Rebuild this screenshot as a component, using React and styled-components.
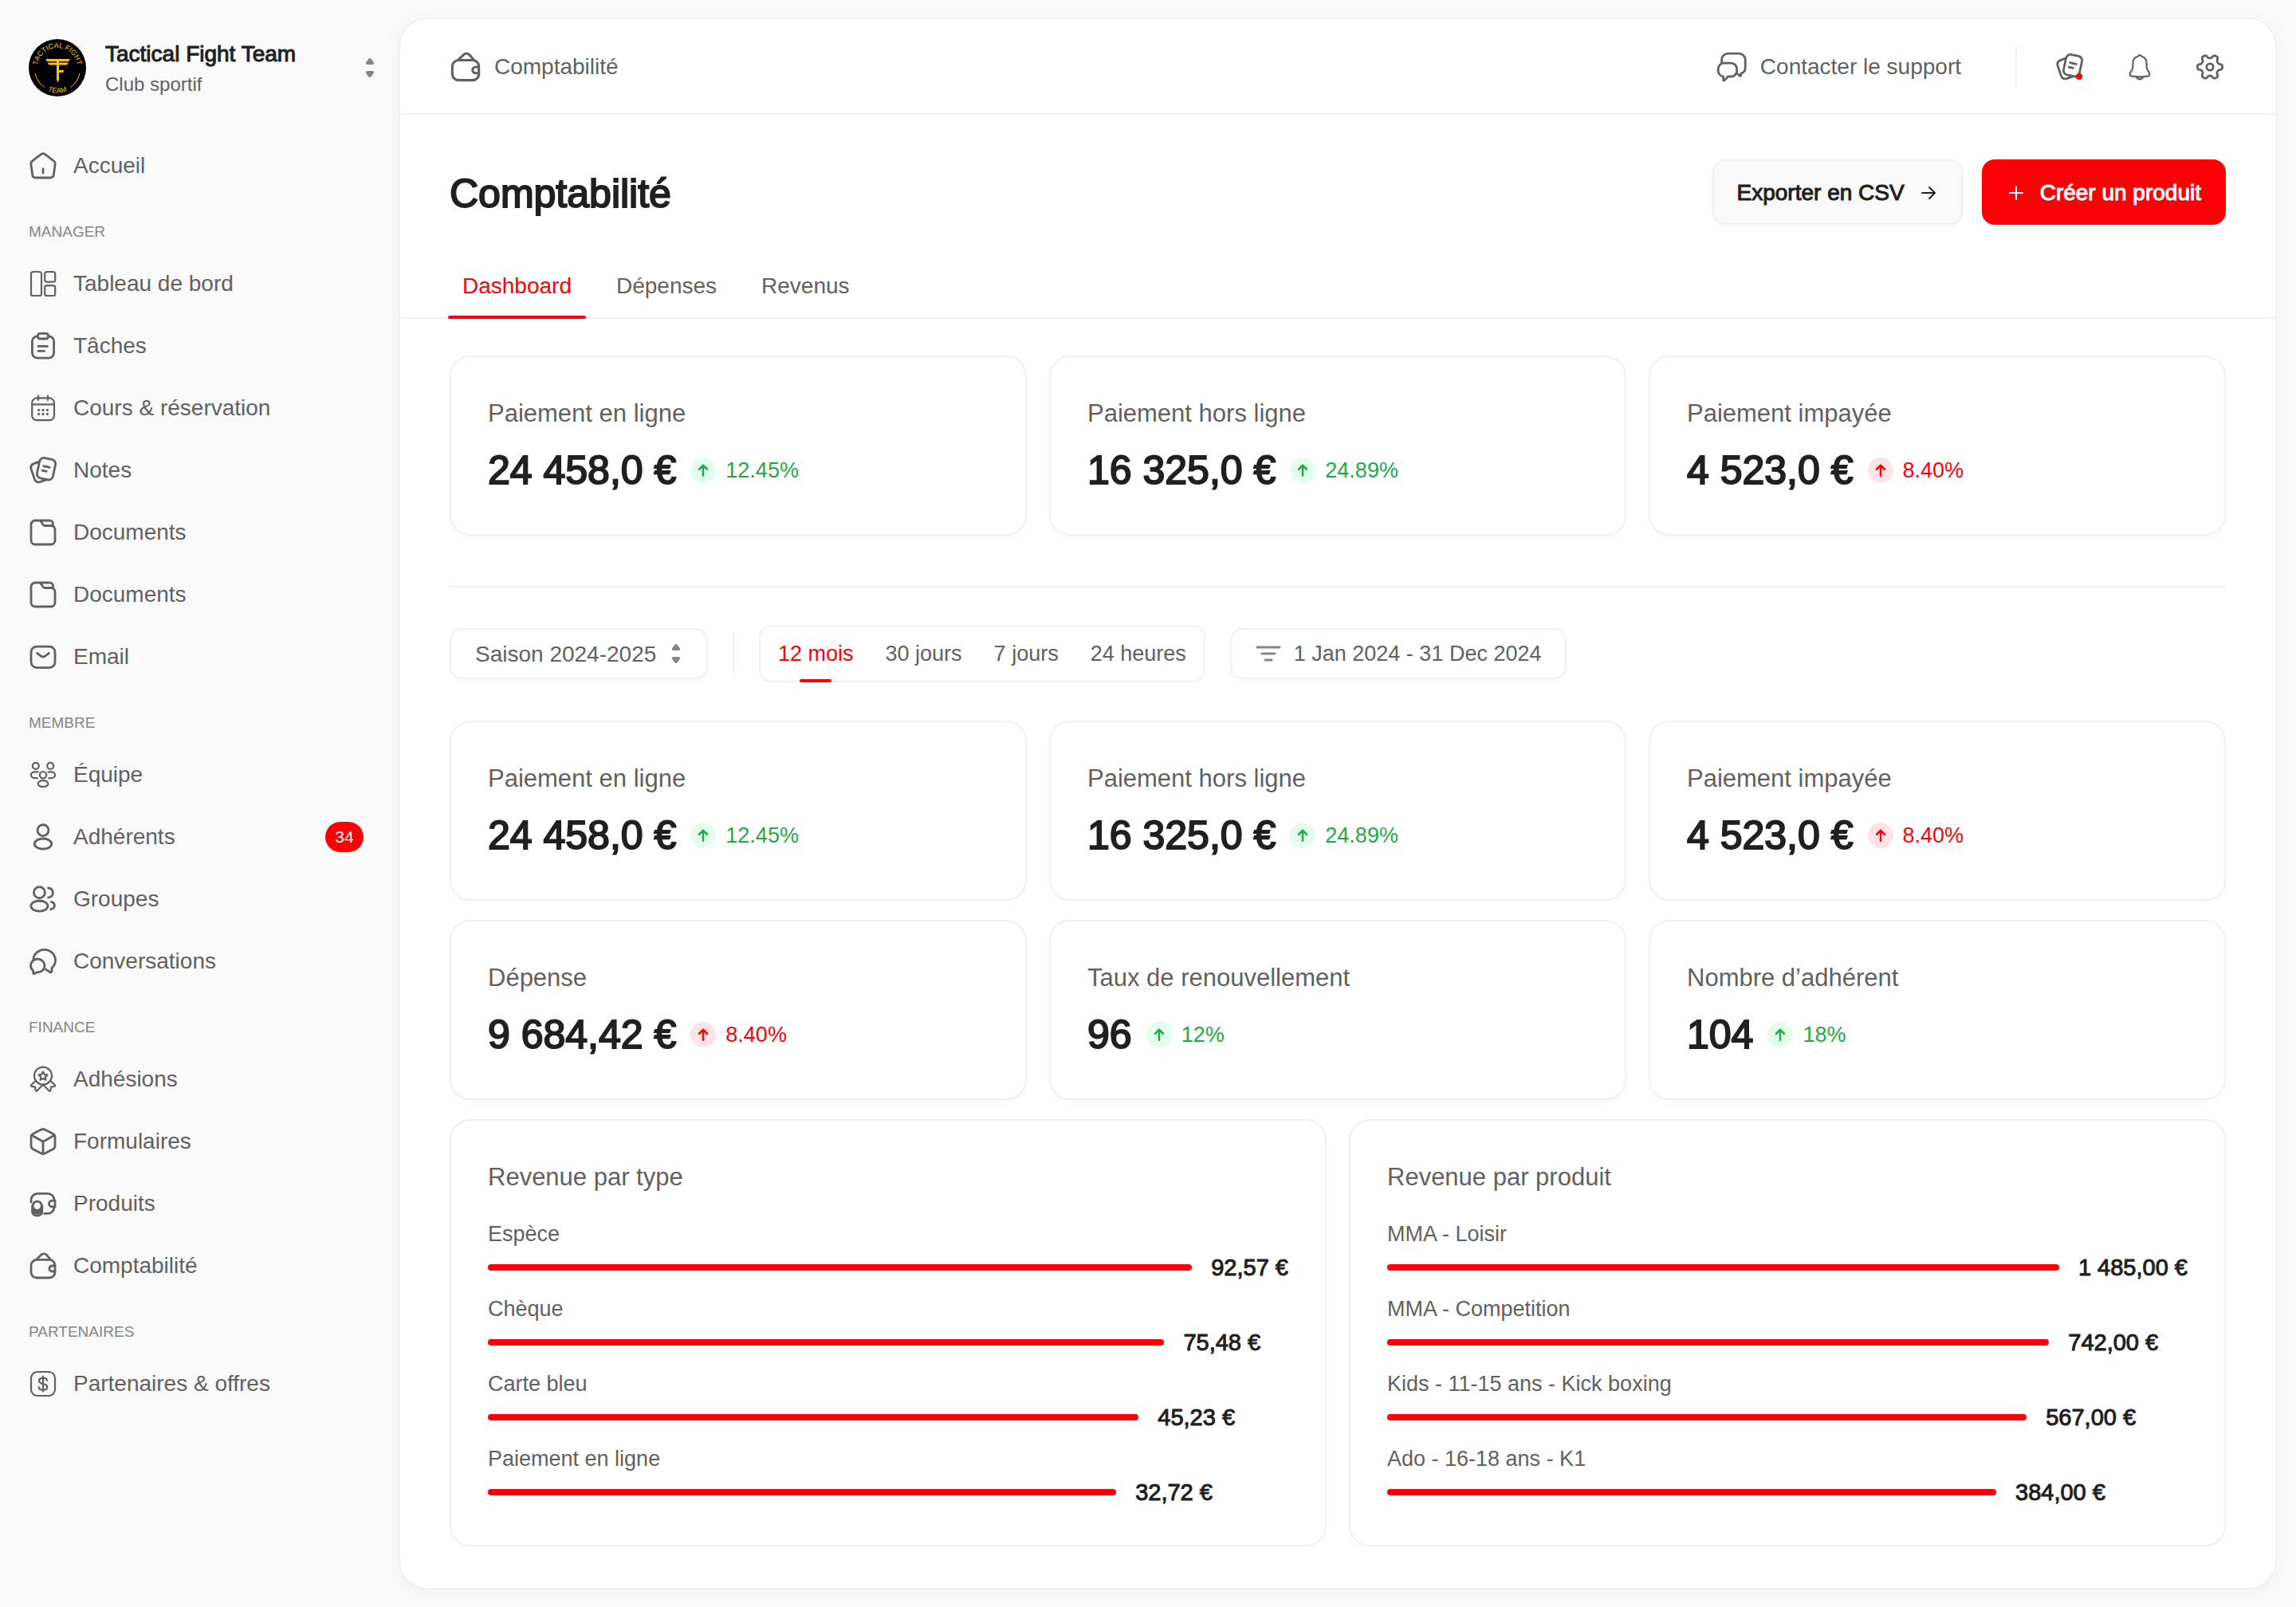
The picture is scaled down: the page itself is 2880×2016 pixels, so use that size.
import React from "react";
import styled, { createGlobalStyle, css } from "styled-components";

const color = {
  page: "#f9f9f9",
  surface: "#ffffff",
  line: "#f0f0f0",
  text: "#616161",
  strong: "#202020",
  muted: "#858585",
  red: "#fb0007",
  redSoft: "#ffe4e6",
  green: "#22a94a",
  greenSoft: "#e3fdec",
};

const Global = createGlobalStyle`
  *, *::before, *::after { box-sizing: border-box; }
  body {
    margin: 0;
    background: ${color.page};
    color: ${color.text};
    font-family: "Liberation Sans", Arial, sans-serif;
    font-size: 28px;
  }
  button, select { font: inherit; color: inherit; margin: 0; cursor: pointer; }
  a { color: inherit; text-decoration: none; }
  h1, h2, p, ul, dl, dd { margin: 0; padding: 0; font-weight: 400; }
  ul { list-style: none; }
`;

const medium = css`
  color: ${color.strong};
  -webkit-text-stroke: 1px currentColor;
`;

const display = css`
  color: ${color.strong};
  font-size: 50px;
  line-height: 60px;
  -webkit-text-stroke: 2px currentColor;
`;

/* ---------- icons ---------- */

const Svg = styled.svg`
  flex: none;
  display: block;
  width: ${(p) => p.$size || 36}px;
  height: ${(p) => p.$size || 36}px;
  fill: none;
  stroke: currentColor;
  stroke-width: ${(p) => p.$weight || 2.8};
  stroke-linecap: round;
  stroke-linejoin: round;
`;

const cogPath = (() => {
  const points = [];
  for (let i = 0; i < 120; i += 1) {
    const a = (i / 120) * Math.PI * 2;
    const wave = Math.tanh(2 * Math.cos(6 * a)) / Math.tanh(2);
    const r = 13.4 + 2.2 * wave;
    points.push(`${(18 + r * Math.cos(a)).toFixed(2)} ${(18 + r * Math.sin(a)).toFixed(2)}`);
  }
  return `M${points.join("L")}Z`;
})();

const icons = {
  home: (
    <>
      <path d="M15.4 3.6a4.4 4.4 0 0 1 5.2 0L31.4 11.8a4.4 4.4 0 0 1 1.7 4.1L31.4 29a4.6 4.6 0 0 1-4.5 4H9.1a4.6 4.6 0 0 1-4.5-4L2.9 15.9a4.4 4.4 0 0 1 1.7-4.1Z" />
      <path d="M18 22v5" />
    </>
  ),
  board: (
    <>
      <rect x="3" y="3" width="13" height="30" rx="2.6" />
      <rect x="20.2" y="3" width="13" height="12.6" rx="2.6" />
      <rect x="20.2" y="20.2" width="13" height="12.8" rx="2.6" />
    </>
  ),
  tasks: (
    <>
      <path d="M11.6 5.8h-1A6.4 6.4 0 0 0 4.4 12v14.4a6.8 6.8 0 0 0 6.8 6.8h13.6a6.8 6.8 0 0 0 6.8-6.8V12a6.4 6.4 0 0 0-6.2-6.2h-1" />
      <rect x="11.6" y="2.4" width="12.8" height="6.6" rx="2.4" />
      <path d="M12 18.4h11.4M12 24.4h7.4" />
    </>
  ),
  calendar: (
    <>
      <rect x="4.2" y="5.4" width="27.8" height="27.8" rx="6" />
      <path d="M4.2 13.4H32M12 2.6v5.4M24 2.6v5.4" />
      <g fill="currentColor" stroke="none">
        <circle cx="12.6" cy="20.3" r="1.6" />
        <circle cx="18" cy="20.3" r="1.6" />
        <circle cx="23.4" cy="20.3" r="1.6" />
        <circle cx="12.6" cy="25.4" r="1.6" />
        <circle cx="18" cy="25.4" r="1.6" />
        <circle cx="23.4" cy="25.4" r="1.6" />
      </g>
    </>
  ),
  notes: (
    <>
      <rect x="11.8" y="3.2" width="20.4" height="26" rx="5.6" transform="rotate(12 22 16.2)" />
      <path d="M12.6 7.2 6.6 9.6C3.4 10.8 2.2 13.1 3 16.2L7.2 28.6c1 3.3 3.6 4.900 7 4.100l8.800-3" />
      <path d="m18.6 12.6 7.6 1.8M17 18.2l5.2 1.2" />
    </>
  ),
  folder: (
    <path d="M14.5 3H8a5 5 0 0 0-5 5v20a5 5 0 0 0 5 5h20a5 5 0 0 0 5-5V14.5a5 5 0 0 0-5-5h-7.4a3 3 0 0 1-2.5-1.3L14.5 3h12a4 4 0 0 1 4 4v3" />
  ),
  mail: (
    <>
      <rect x="3" y="5.2" width="30" height="26.4" rx="7" />
      <path d="m10.6 13.4 4.2 3.3a5.2 5.2 0 0 0 6.4 0l4.2-3.3" />
    </>
  ),
  team: (
    <>
      <circle cx="8.8" cy="6.8" r="4" />
      <circle cx="27.2" cy="6.8" r="4" />
      <circle cx="18" cy="18.2" r="4.2" />
      <ellipse cx="18" cy="29.2" rx="6.4" ry="4" />
      <path d="M11.4 14.400H8.400c-3.200 0-5.600 1.600-5.600 3.900s2.400 3.900 5.600 3.900h2.400M24.600 14.400h3c3.200 0 5.600 1.600 5.600 3.900s-2.400 3.900-5.600 3.900h-2.400" />
    </>
  ),
  user: (
    <>
      <circle cx="18" cy="9.6" r="7" />
      <ellipse cx="18" cy="26.6" rx="10.8" ry="6.6" />
    </>
  ),
  users: (
    <>
      <circle cx="13.4" cy="9.6" r="7" />
      <ellipse cx="13.4" cy="26.6" rx="10.6" ry="6.6" />
      <path d="M24.6 4c3.6.2 5.8 2.6 5.8 5.9s-2.2 5.7-5.8 5.9M28.2 21.4c2.6.6 4.2 2.2 4.2 4.5 0 2.4-1.8 4.2-4.8 4.8" />
    </>
  ),
  chat: (
    <>
      <path d="M5.8 15.4A13.9 13.6 0 0 1 33.5 16.4c0 3.900-1.500 7.200-4.300 9.600l-.4 4.400c-.1 1.400-.9 1.800-2 1.100l-6-3.600" />
      <path d="M11.2 15a8.7 8.7 0 0 1 8.8 8.6c0 4.700-3.600 7.900-8.200 8.100-1.200 0-2 .3-2.800.8l-1.600.9c-.9.4-1.500.1-1.600-.9l-.2-2.600c-2-1.600-3.100-3.700-3.100-6.300A8.7 8.7 0 0 1 11.2 15Z" />
    </>
  ),
  award: (
    <>
      <circle cx="18" cy="13.6" r="11" />
      <path d="m18 8.4 1.7 3.4 3.7.6-2.6 2.7.6 3.7-3.4-1.7-3.4 1.7.6-3.7-2.6-2.7 3.7-.6Z" />
      <path d="m8.2 20.2-5 5c-.7.8-.4 1.5.5 1.7l4.3.7.7 4.3c.2 1 1 1.2 1.7.5l7.6-8 7.6 8c.7.7 1.5.5 1.7-.5l.7-4.3 4.3-.7c.9-.2 1.2-.9.5-1.7l-5-5" />
    </>
  ),
  box: (
    <>
      <path d="M15.4 3.2a5.6 5.6 0 0 1 5.2 0l9.8 5.1a4.8 4.8 0 0 1 2.6 4.3v10.8a4.8 4.8 0 0 1-2.6 4.3l-9.8 5.1a5.6 5.6 0 0 1-5.2 0l-9.8-5.1A4.8 4.8 0 0 1 3 23.4V12.6a4.8 4.8 0 0 1 2.6-4.3Z" />
      <path d="M4 10.2 18 18.200l14-8M18 18.200V33" />
    </>
  ),
  coins: (
    <>
      <path d="M3 16v-2.600a8 8 0 0 1 8-8h13a8 8 0 0 1 8 8v.8M19.600 30.400H24a8 8 0 0 0 8-8v-.4" />
      <path d="M33 14.200h-3.600a3.900 3.900 0 0 0 0 7.800H33Z" />
      <circle cx="10.700" cy="20.800" r="5.600" />
      <path d="M4.600 21v7.200c0 2.800 2.600 4.800 6.100 4.800s6.100-2 6.100-4.800V21M4.800 24.600c.8 2 3 3.400 5.900 3.400s5.100-1.400 5.900-3.400" />
      <path d="M4.800 28c.8 1.400 3 2.300 5.900 2.300s5.100-.9 5.900-2.300" />
    </>
  ),
  wallet: (
    <>
      <rect x="3" y="10.400" width="30" height="22.600" rx="7" />
      <path d="m9.800 10 6-5.900a4.600 4.600 0 0 1 6.400 0l5 5.900" />
      <path d="M33 18h-3.600a3.500 3.500 0 0 0 0 7H33" />
    </>
  ),
  dollar: (
    <>
      <rect x="3" y="3" width="30" height="30" rx="8" />
      <path d="M23 13.800c-.3-2-2.200-3.200-5-3.200s-5 1.400-5 3.600 1.800 3.200 5 3.800 5.200 1.600 5.200 4-2.200 3.700-5.200 3.700-5.200-1.300-5.300-3.500M18 8.600v19" />
    </>
  ),
  support: (
    <>
      <path d="M7.600 15v-3.800A8 8 0 0 1 15.600 3.200h13.600a8 8 0 0 1 8 8v9.600a8 8 0 0 1-5.600 7.600v2c0 1-.8 1.300-1.500.6l-3.500-3" />
      <path d="M10.400 15.200h9a7.200 7.200 0 0 1 7.200 7.200v2.400a7.200 7.200 0 0 1-7.200 7.200h-3.800l-4.200 4.600c-.9.9-1.800.6-1.800-.6v-4.200A7 7 0 0 1 3.200 25v-2.600a7.200 7.200 0 0 1 7.200-7.200Z" />
    </>
  ),
  bell: (
    <>
      <path d="M18 3.200c-1.300 0-2 .6-2.400 1.600-4 1.100-6.200 4.400-6.200 8.700v3.800c0 2.200-.6 3.800-1.700 5.400L6.200 25c-1.400 2.400-.5 4.300 1.900 4.600 3.200.5 6.500.7 9.900.7s6.700-.2 9.900-.7c2.400-.3 3.300-2.200 1.900-4.600l-1.500-2.300c-1.100-1.600-1.700-3.200-1.700-5.400v-3.800c0-4.300-2.200-7.600-6.200-8.700-.4-1-1.100-1.600-2.400-1.600Z" />
      <path d="M14 30.400c.5 1.700 1.900 2.900 4 2.900s3.500-1.200 4-2.900" />
    </>
  ),
  gear: (
    <>
      <path d={cogPath} />
      <circle cx="18" cy="18" r="4.200" />
    </>
  ),
  arrowRight: <path d="M4 12h15.500M13 5l7 7-7 7" />,
  plus: <path d="M12 4v16M4 12h16" />,
  arrowUp: <path d="M12 20V5M6 10.500 12 4.500l6 6" />,
};

const thin = { board: 2.2, calendar: 2.2, team: 2.2, award: 2.2, dollar: 2.2, bell: 2.2 };

function Icon({ name, size = 36, box = 36, weight }) {
  return (
    <Svg $size={size} $weight={weight || thin[name]} viewBox={`0 0 ${box} ${box}`} aria-hidden="true">
      {icons[name]}
    </Svg>
  );
}

const SortSvg = styled.svg`
  display: block;
  flex: none;
  width: 12px;
  height: 24px;
  fill: ${color.muted};
`;

const SortMark = () => (
  <SortSvg viewBox="0 0 12 24" aria-hidden="true">
    <path d="M6 0c.7 0 1.200.4 1.800 1.100l2.700 3.700C11.600 6.600 11 8 9.200 8H2.800C1 8 .4 6.600 1.500 4.800l2.700-3.700C4.800.4 5.300 0 6 0Z" />
    <path d="M6 24c.7 0 1.200-.4 1.800-1.100l2.700-3.700c1.100-1.800.5-3.200-1.300-3.200H2.800C1 16 .4 17.400 1.500 19.200l2.700 3.700c.6.700 1.100 1.100 1.800 1.100Z" />
  </SortSvg>
);

/* ---------- shell ---------- */

const Shell = styled.div`
  display: grid;
  grid-template-columns: 500px minmax(0, 1fr);
  min-height: 100vh;
`;

const Sidebar = styled.aside`
  padding: 46px 0 0 36px;
`;

const Profile = styled.button`
  display: flex;
  align-items: center;
  width: 100%;
  gap: 24px;
  padding: 0 30px 0 0;
  margin-bottom: 45px;
  border: 0;
  background: none;
  text-align: left;
`;

const LogoSvg = styled.svg`
  display: block;
  flex: none;
  width: 72px;
  height: 72px;
`;

const LogoText = styled.text`
  fill: #f5c518;
  font-family: "Liberation Sans", sans-serif;
  font-size: 9px;
`;

const ProfileText = styled.span`
  display: flex;
  flex: 1;
  flex-direction: column;
  gap: 2px;
  padding-top: 4px;
`;

const ProfileName = styled.span`
  ${medium}
  line-height: 36px;
`;

const ProfileKind = styled.span`
  font-size: 24px;
  line-height: 36px;
`;

const NavLabel = styled.h2`
  padding: 26px 0 8px;
  color: ${color.muted};
  font-size: 19px;
  line-height: 36px;
  text-transform: uppercase;
`;

const NavLink = styled.a`
  display: flex;
  align-items: center;
  gap: 20px;
  height: 78px;
  padding-right: 44px;
`;

const Count = styled.span`
  margin-left: auto;
  min-width: 48px;
  height: 38px;
  border-radius: 19px;
  background: ${color.red};
  color: #fff;
  font-size: 21px;
  line-height: 38px;
  text-align: center;
`;

const Sheet = styled.main`
  margin: 22px 24px 22px 0;
  border: 2px solid ${color.line};
  border-radius: 36px;
  background: ${color.surface};
  box-shadow: 0 4px 16px rgba(0, 0, 0, 0.03);
`;

/* ---------- top bar ---------- */

const TopBar = styled.header`
  display: flex;
  align-items: center;
  justify-content: space-between;
  height: 120px;
  padding: 2px 62px 0;
  border-bottom: 2px solid ${color.line};
`;

const TopGroup = styled.div`
  display: flex;
  align-items: center;
`;

const TopLink = styled.a`
  display: flex;
  align-items: center;
  gap: 16px;
`;

const Rule = styled.span`
  width: 2px;
  height: 52px;
  background: ${color.line};
`;

const TopRule = styled(Rule)`
  margin: 0 46px 0 68px;
`;

const Tools = styled.div`
  display: flex;
  gap: 48px;
`;

const ToolButton = styled.button`
  position: relative;
  display: grid;
  place-items: center;
  width: 40px;
  height: 40px;
  padding: 0;
  border: 0;
  background: none;
`;

const Dot = styled.span`
  position: absolute;
  right: 4px;
  bottom: 4px;
  width: 8px;
  height: 8px;
  border-radius: 50%;
  background: ${color.red};
`;

/* ---------- page head ---------- */

const PageHead = styled.div`
  display: flex;
  align-items: center;
  justify-content: space-between;
  padding: 56px 62px 34px;
`;

const Title = styled.h1`
  ${display}
  padding-top: 4px;
`;

const Actions = styled.div`
  display: flex;
  gap: 24px;
`;

const Action = styled.button`
  ${medium}
  display: flex;
  align-items: center;
  gap: 18px;
  height: 82px;
  padding: 2px 29px 0;
  border: 2px solid ${(p) => (p.$primary ? color.red : color.line)};
  border-radius: 16px;
  background: ${(p) => (p.$primary ? color.red : color.page)};
  color: ${(p) => (p.$primary ? "#fff" : color.strong)};
  box-shadow: 0 2px 6px rgba(0, 0, 0, 0.03);
`;

const Tabs = styled.div`
  display: flex;
  gap: 20px;
  padding: 0 60px;
  box-shadow: inset 0 -2px 0 ${color.line};
`;

const Tab = styled.button`
  position: relative;
  height: 84px;
  padding: 2px 18px 0;
  border: 0;
  background: none;
  color: ${(p) => (p["aria-selected"] ? color.red : color.text)};

  &[aria-selected="true"]::after {
    content: "";
    position: absolute;
    inset: auto 0 0;
    height: 4px;
    border-radius: 2px;
    background: ${color.red};
  }
`;

/* ---------- content ---------- */

const Content = styled.div`
  padding: 46px 62px 52px;
`;

const Grid = styled.section`
  display: grid;
  grid-template-columns: repeat(${(p) => p.$cols}, minmax(0, 1fr));
  gap: 24px 28px;
  margin-bottom: ${(p) => (p.$spaced ? 24 : 0)}px;
`;

const Card = styled.article`
  padding: 50px 46px ${(p) => (p.$list ? 46 : 50)}px;
  border: 2px solid ${color.line};
  border-radius: 26px;
  background: ${color.surface};
  box-shadow: 0 4px 8px rgba(0, 0, 0, 0.02);
`;

const CardLabel = styled.h2`
  font-size: 31px;
  line-height: 42px;
`;

const Figure = styled.div`
  display: flex;
  align-items: center;
  margin-top: 20px;
`;

const Amount = styled.span`
  ${display}
  margin-right: 18px;
`;

const Trend = styled.span`
  display: flex;
  align-items: center;
  gap: 12px;
  color: ${(p) => (p.$bad ? color.red : color.green)};
  font-size: 27px;
`;

const TrendMark = styled.span`
  display: grid;
  place-items: center;
  width: 32px;
  height: 32px;
  border-radius: 50%;
  background: ${(p) => (p.$bad ? color.redSoft : color.greenSoft)};
`;

const Divider = styled.hr`
  height: 2px;
  margin: 63px 0 47px;
  border: 0;
  background: ${color.line};
`;

const Filters = styled.div`
  display: flex;
  align-items: center;
  gap: 31px;
  margin-bottom: 48px;
`;

const field = css`
  height: 64px;
  border: 2px solid ${color.line};
  border-radius: 16px;
  background: ${color.surface};
  box-shadow: 0 2px 6px rgba(0, 0, 0, 0.03);
`;

const SelectBox = styled.label`
  position: relative;
  display: block;

  svg {
    position: absolute;
    top: 20px;
    right: 34px;
    pointer-events: none;
  }
`;

const Season = styled.select`
  ${field}
  width: 324px;
  padding: 0 30px;
  appearance: none;
`;

const Segments = styled.div`
  display: flex;
  gap: 40px;
  height: 72px;
  padding: 0 22px;
  border: 2px solid ${color.line};
  border-radius: 16px;
`;

const Segment = styled.button`
  position: relative;
  padding: 0;
  border: 0;
  background: none;
  font-size: 27px;
  color: ${(p) => (p["aria-pressed"] ? color.red : color.text)};

  &[aria-pressed="true"]::after {
    content: "";
    position: absolute;
    bottom: -2px;
    left: calc(50% - 20px);
    width: 40px;
    height: 4px;
    border-radius: 2px;
    background: ${color.red};
  }
`;

const DateRange = styled.button`
  ${field}
  display: flex;
  align-items: center;
  gap: 16px;
  padding: 0 30px;
  font-size: 27px;
`;

const FilterSvg = styled.svg`
  display: block;
  width: 32px;
  height: 24px;
  fill: none;
  stroke: ${color.muted};
  stroke-width: 3;
  stroke-linecap: round;
`;

const BarList = styled.dl`
  display: grid;
  gap: 12px;
  margin-top: 30px;
`;

const BarItem = styled.div`
  display: grid;
  gap: 2px;
`;

const BarName = styled.dt`
  font-size: 27px;
  line-height: 40px;
`;

const BarLine = styled.dd`
  display: flex;
  align-items: center;
  gap: 24px;
`;

const Bar = styled.span`
  height: 8px;
  border-radius: 4px;
  background: ${color.red};
`;

const BarValue = styled.span`
  ${medium}
  font-size: 29px;
  line-height: 40px;
  white-space: nowrap;
`;

/* ---------- data ---------- */

const menu = [
  { items: [["home", "Accueil"]] },
  {
    title: "Manager",
    items: [
      ["board", "Tableau de bord"],
      ["tasks", "Tâches"],
      ["calendar", "Cours & réservation"],
      ["notes", "Notes"],
      ["folder", "Documents"],
      ["folder", "Documents"],
      ["mail", "Email"],
    ],
  },
  {
    title: "Membre",
    items: [
      ["team", "Équipe"],
      ["user", "Adhérents", 34],
      ["users", "Groupes"],
      ["chat", "Conversations"],
    ],
  },
  {
    title: "Finance",
    items: [
      ["award", "Adhésions"],
      ["box", "Formulaires"],
      ["coins", "Produits"],
      ["wallet", "Comptabilité"],
    ],
  },
  { title: "Partenaires", items: [["dollar", "Partenaires & offres"]] },
];

const payments = [
  { label: "Paiement en ligne", value: "24 458,0 €", trend: "12.45%" },
  { label: "Paiement hors ligne", value: "16 325,0 €", trend: "24.89%" },
  { label: "Paiement impayée", value: "4 523,0 €", trend: "8.40%", bad: true },
];

const indicators = [
  { label: "Dépense", value: "9 684,42 €", trend: "8.40%", bad: true },
  { label: "Taux de renouvellement", value: "96", trend: "12%" },
  { label: "Nombre d’adhérent", value: "104", trend: "18%" },
];

const breakdowns = [
  {
    title: "Revenue par type",
    rows: [
      ["Espèce", "92,57 €", 88],
      ["Chèque", "75,48 €", 84.5],
      ["Carte bleu", "45,23 €", 81.3],
      ["Paiement en ligne", "32,72 €", 78.5],
    ],
  },
  {
    title: "Revenue par produit",
    rows: [
      ["MMA - Loisir", "1 485,00 €", 84],
      ["MMA - Competition", "742,00 €", 82.7],
      ["Kids - 11-15 ans - Kick boxing", "567,00 €", 79.9],
      ["Ado - 16-18 ans - K1", "384,00 €", 76.1],
    ],
  },
];

/* ---------- parts ---------- */

const Logo = () => (
  <LogoSvg viewBox="0 0 72 72" role="img" aria-label="Tactical Fight Team">
    <defs>
      <path id="logo-top" d="M12 43A25 25 0 1 1 60 43" />
      <path id="logo-bottom" d="M10 54A31.600 31.600 0 0 0 62 54" />
    </defs>
    <circle cx="36" cy="36" r="36" />
    <g fill="#f5c518">
      <path d="M21 25h31l-2 3H38v1.600h12l-2 3H38V39h6.500l-1.500 3h-5v9l-1.500 3.500L35 51V32.600H25.500l-2-3H35V28H23z" />
    </g>
    <path d="M8 43a29 29 0 0 0 11.500 17.500M64 43a29 29 0 0 1-11.500 17.500" fill="none" stroke="#f5c518" />
    <LogoText textAnchor="middle">
      <textPath href="#logo-top" startOffset="50%">TACTICAL FIGHT</textPath>
    </LogoText>
    <LogoText textAnchor="middle">
      <textPath href="#logo-bottom" startOffset="50%">TEAM</textPath>
    </LogoText>
  </LogoSvg>
);

const StatCard = ({ label, value, trend, bad }) => (
  <Card>
    <CardLabel>{label}</CardLabel>
    <Figure>
      <Amount>{value}</Amount>
      <Trend $bad={bad}>
        <TrendMark $bad={bad}>
          <Icon name="arrowUp" size={20} box={24} weight={3} />
        </TrendMark>
        {trend}
      </Trend>
    </Figure>
  </Card>
);

const BreakdownCard = ({ title, rows }) => (
  <Card $list>
    <CardLabel>{title}</CardLabel>
    <BarList>
      {rows.map(([name, value, share]) => (
        <BarItem key={name}>
          <BarName>{name}</BarName>
          <BarLine>
            <Bar style={{ width: `${share}%` }} />
            <BarValue>{value}</BarValue>
          </BarLine>
        </BarItem>
      ))}
    </BarList>
  </Card>
);

export default function App() {
  const [tab, setTab] = React.useState("Dashboard");
  const [period, setPeriod] = React.useState("12 mois");

  return (
    <>
      <Global />
      <Shell>
        <Sidebar>
          <Profile type="button">
            <Logo />
            <ProfileText>
              <ProfileName>Tactical Fight Team</ProfileName>
              <ProfileKind>Club sportif</ProfileKind>
            </ProfileText>
            <SortMark />
          </Profile>
          <nav>
            {menu.map(({ title, items }) => (
              <div key={title || "top"}>
                {title && <NavLabel>{title}</NavLabel>}
                <ul>
                  {items.map(([icon, label, count], i) => (
                    <li key={i}>
                      <NavLink href="#">
                        <Icon name={icon} />
                        {label}
                        {count && <Count>{count}</Count>}
                      </NavLink>
                    </li>
                  ))}
                </ul>
              </div>
            ))}
          </nav>
        </Sidebar>

        <Sheet>
          <TopBar>
            <TopLink href="#">
              <Icon name="wallet" size={40} />
              Comptabilité
            </TopLink>
            <TopGroup>
              <TopLink href="#">
                <Icon name="support" size={40} box={40} />
                Contacter le support
              </TopLink>
              <TopRule />
              <Tools>
                <ToolButton type="button" aria-label="Notes">
                  <Icon name="notes" />
                  <Dot />
                </ToolButton>
                <ToolButton type="button" aria-label="Notifications">
                  <Icon name="bell" />
                </ToolButton>
                <ToolButton type="button" aria-label="Paramètres">
                  <Icon name="gear" />
                </ToolButton>
              </Tools>
            </TopGroup>
          </TopBar>

          <PageHead>
            <Title>Comptabilité</Title>
            <Actions>
              <Action type="button">
                Exporter en CSV
                <Icon name="arrowRight" size={24} box={24} weight={2} />
              </Action>
              <Action type="button" $primary>
                <Icon name="plus" size={24} box={24} weight={2} />
                Créer un produit
              </Action>
            </Actions>
          </PageHead>

          <Tabs role="tablist">
            {["Dashboard", "Dépenses", "Revenus"].map((name) => (
              <Tab key={name} type="button" role="tab" aria-selected={tab === name} onClick={() => setTab(name)}>
                {name}
              </Tab>
            ))}
          </Tabs>

          <Content>
            <Grid $cols={3}>
              {payments.map((item) => (
                <StatCard key={item.label} {...item} />
              ))}
            </Grid>

            <Divider />

            <Filters>
              <SelectBox>
                <Season aria-label="Saison" defaultValue="2024">
                  <option value="2024">Saison 2024-2025</option>
                </Season>
                <SortMark />
              </SelectBox>
              <Rule />
              <Segments>
                {["12 mois", "30 jours", "7 jours", "24 heures"].map((name) => (
                  <Segment key={name} type="button" aria-pressed={period === name} onClick={() => setPeriod(name)}>
                    {name}
                  </Segment>
                ))}
              </Segments>
              <DateRange type="button">
                <FilterSvg viewBox="0 0 32 24" aria-hidden="true">
                  <path d="M2 4h28M8 12h16M12 20h8" />
                </FilterSvg>
                1 Jan 2024 - 31 Dec 2024
              </DateRange>
            </Filters>

            <Grid $cols={3} $spaced>
              {[...payments, ...indicators].map((item) => (
                <StatCard key={item.label} {...item} />
              ))}
            </Grid>
            <Grid $cols={2}>
              {breakdowns.map((item) => (
                <BreakdownCard key={item.title} {...item} />
              ))}
            </Grid>
          </Content>
        </Sheet>
      </Shell>
    </>
  );
}
